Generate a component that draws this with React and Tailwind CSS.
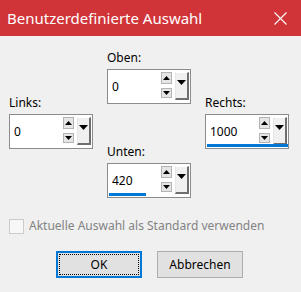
import React from "react";

const font = { fontFamily: '"Noto Sans", "Open Sans", sans-serif' };

const Tri = ({ up, w = 7, h = 4 }) => (
  <svg width={w} height={h} viewBox={`0 0 ${w} ${h}`}>
    <polygon
      points={up ? `0,${h} ${w},${h} ${w / 2},0` : `0,0 ${w},0 ${w / 2},${h}`}
      fill="#000"
    />
  </svg>
);

const SpinField = ({ value, bar }) => (
  <div className="relative flex h-[35px] w-[84px] border border-[#8c8c8c] bg-white">
    <span className="flex-1 self-center pl-[4px] text-[12px] leading-[16px] text-black">
      {value}
    </span>
    <div className="mt-[2px] flex flex-col">
      <div className="flex h-[12px] w-[11px] items-center justify-center border border-[#b4b4b4] bg-[#e5e5e5]">
        <Tri up w={7} h={4} />
      </div>
      <div className="mt-[4px] flex h-[10px] w-[11px] items-center justify-center border border-[#b4b4b4] bg-[#e5e5e5]">
        <Tri w={7} h={4} />
      </div>
    </div>
    <div className="ml-[3px] mr-[1px] mt-[2px] flex h-[28px] w-[14px] justify-center border-b-2 border-l border-r-2 border-t border-b-[#6e6e6e] border-l-[#e6e6e6] border-r-[#6e6e6e] border-t-[#ffffff] bg-[#f0f0f0] pt-[7px]">
      <Tri w={9} h={5} />
    </div>
    {bar && (
      <div
        className="absolute bottom-[1px] left-[1px] h-[3px] bg-[#0078d7]"
        style={{ width: bar }}
      />
    )}
  </div>
);

const Field = ({ label, value, bar }) => (
  <div className="flex flex-col">
    <div className="h-[19px] text-[12px] leading-[16px] text-black">{label}</div>
    <SpinField value={value} bar={bar} />
  </div>
);

export default function App() {
  return (
    <div className="h-[292px] w-[301px] bg-[#f0f0f0]" style={font}>
      <div className="flex h-[36px] items-center justify-between bg-[#d13438] pl-[7px] pr-[14px] text-white">
        <span className="text-[15px] leading-[20px]">Benutzerdefinierte Auswahl</span>
        <svg width="13" height="13" viewBox="0 0 13 13">
          <path d="M0.5 0.5 L12.5 12.5 M12.5 0.5 L0.5 12.5" stroke="#fff" strokeWidth="1.1" />
        </svg>
      </div>

      <div className="flex gap-[14px] pl-[9px] pt-[14px]">
        <div className="pt-[45px]">
          <Field label="Links:" value="0" />
        </div>
        <div className="flex flex-col">
          <Field label="Oben:" value="0" />
          <div className="mt-[40px]">
            <Field label="Unten:" value="420" bar={37} />
          </div>
        </div>
        <div className="pt-[45px]">
          <Field label="Rechts:" value="1000" bar={81} />
        </div>
      </div>

      <div className="mt-[20px] flex items-center pl-[9px]">
        <div className="h-[15px] w-[15px] border border-[#cccccc] bg-[#f7f7f7]" />
        <span className="ml-[5px] text-[12px] leading-[16px] text-[#838383]">
          Aktuelle Auswahl als Standard verwenden
        </span>
      </div>

      <div className="mt-[17px] flex justify-center gap-[15px] pr-[2px]">
        <button className="flex h-[27px] w-[86px] items-center justify-center border-2 border-[#0078d7] bg-[#e1e1e1] p-[1px]">
          <span className="flex h-full w-full items-center justify-center border border-dotted border-black text-[12px] text-black">
            OK
          </span>
        </button>
        <button className="flex h-[27px] w-[86px] items-center justify-center border border-[#adadad] bg-[#e1e1e1] text-[12px] text-black">
          Abbrechen
        </button>
      </div>
    </div>
  );
}
